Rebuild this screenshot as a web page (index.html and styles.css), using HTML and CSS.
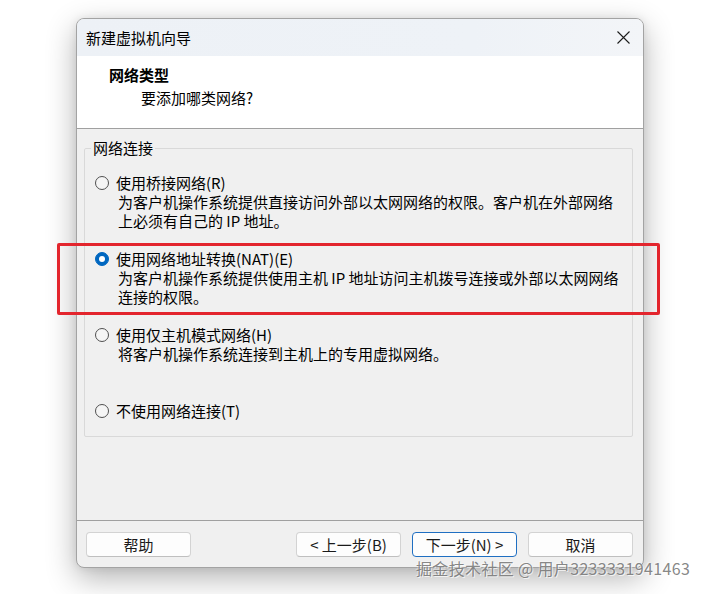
FILE: index.html
```html
<!DOCTYPE html>
<html lang="zh-CN">
<head>
<meta charset="utf-8">
<title>新建虚拟机向导</title>
<link rel="stylesheet" href="styles.css">
</head>
<body>
<div class="stage">
  <div class="window">
    <div class="titlebar">
      <span class="title">新建虚拟机向导</span>
      <svg class="close" width="13" height="13" viewBox="0 0 13 13"><path d="M0.5 0.5L12.5 12.5M12.5 0.5L0.5 12.5" stroke="#1b1b1b" stroke-width="1.1" fill="none"/></svg>
    </div>
    <div class="header">
      <div class="h-title">网络类型</div>
      <div class="h-sub">要添加哪类网络?</div>
    </div>
    <div class="content">
      <fieldset class="group">
        <legend>网络连接</legend>
        <div class="option">
          <div class="opt-label"><span class="radio"></span>使用桥接网络(R)</div>
          <div class="desc"><div class="line">为客户机操作系统提供直接访问外部以太网网络的权限。客户机在外部网络</div><div class="line">上必须有自己的 IP 地址。</div></div>
        </div>
        <div class="option">
          <div class="opt-label"><span class="radio checked"></span>使用网络地址转换(NAT)(E)</div>
          <div class="desc"><div class="line">为客户机操作系统提供使用主机 IP 地址访问主机拨号连接或外部以太网网络</div><div class="line">连接的权限。</div></div>
        </div>
        <div class="option">
          <div class="opt-label"><span class="radio"></span>使用仅主机模式网络(H)</div>
          <div class="desc"><div class="line">将客户机操作系统连接到主机上的专用虚拟网络。</div></div>
        </div>
        <div class="option last">
          <div class="opt-label"><span class="radio"></span>不使用网络连接(T)</div>
        </div>
      </fieldset>
    </div>
    <div class="footer">
      <button class="btn">帮助</button>
      <div class="spacer"></div>
      <button class="btn">&lt; 上一步(B)</button>
      <button class="btn primary">下一步(N) &gt;</button>
      <button class="btn">取消</button>
    </div>
  </div>
  <div class="annot"></div>
  <div class="watermark">掘金技术社区 @ 用户3233331941463</div>
</div>
</body>
</html>
```

FILE: styles.css
```css
html, body {
  margin: 0;
  padding: 0;
  background: #ffffff;
}

body {
  font-family: "Noto Sans CJK SC", "Noto Sans", sans-serif;
  font-size: 15px;
  color: #000;
}

.stage {
  position: relative;
  width: 709px;
  height: 594px;
  box-sizing: border-box;
  padding: 18px 0 0 76px;
  overflow: hidden;
}

.window {
  width: 568px;
  height: 550px;
  box-sizing: border-box;
  border: 1px solid #a3a3a3;
  border-radius: 8px;
  background: #f0f0f0;
  box-shadow: 0 10px 30px rgba(0, 0, 0, 0.30), 0 0 8px rgba(0, 0, 0, 0.08);
  display: flex;
  flex-direction: column;
}

.titlebar {
  height: 37px;
  flex: none;
  display: flex;
  align-items: center;
  justify-content: space-between;
  padding: 0 13px 0 9px;
  background: linear-gradient(to right, #edf1f6 0%, #eef2f7 70%, #f3f5f8 100%);
  border-radius: 7px 7px 0 0;
  line-height: 20px;
}

.close {
  display: block;
}

.header {
  height: 73px;
  box-sizing: border-box;
  flex: none;
  background: #ffffff;
  border-bottom: 1px solid #a0a0a0;
  padding: 9px 0 0 32px;
}

.h-title {
  font-weight: bold;
  line-height: 20px;
}

.h-sub {
  margin: 3px 0 0 32px;
  line-height: 20px;
}

.content {
  flex: 1;
  padding: 9px 10px 0 7px;
}

.group {
  margin: 0;
  border: 1px solid #d9d9d9;
  border-radius: 2px;
  padding: 15px 0 15px 0;
  min-width: 0;
}

.group legend {
  margin-left: 6px;
  padding: 0 2px;
  line-height: 20px;
}

.option {
  padding-left: 10px;
  margin-bottom: 19px;
}

.option.last {
  margin-bottom: 0;
}

.opt-label {
  display: flex;
  align-items: center;
  line-height: 20px;
  white-space: nowrap;
}

.radio {
  width: 14px;
  height: 14px;
  box-sizing: border-box;
  border: 1px solid #505050;
  border-radius: 50%;
  margin-right: 7px;
  flex: none;
  background: #f5f5f5;
  position: relative;
}

.radio.checked {
  border-color: #0067c0;
  background: #0067c0;
}

.radio.checked::after {
  content: "";
  position: absolute;
  left: 3px;
  top: 3px;
  width: 6px;
  height: 6px;
  border-radius: 50%;
  background: #ffffff;
}

.desc {
  padding-left: 23px;
  min-height: 37px;
  white-space: nowrap;
}

.desc .line {
  height: 18.5px;
  line-height: 18.5px;
}

.footer {
  flex: none;
  height: 46px;
  border-top: 1px solid #a0a0a0;
  box-sizing: content-box;
  display: flex;
  align-items: flex-start;
  gap: 11px;
  padding: 0 10px 0 9px;
  border-radius: 0 0 7px 7px;
}

.spacer {
  flex: 1;
}

.btn {
  margin-top: 11px;
  width: 105px;
  height: 25px;
  padding: 0;
  background: #fdfdfd;
  border: 1px solid #d3d3d3;
  border-bottom-color: #bfbfbf;
  border-radius: 4px;
  font-family: "Noto Sans CJK SC", "Noto Sans", sans-serif;
  font-size: 15px;
  line-height: 22px;
  color: #1a1a1a;
}

.btn.primary {
  border-color: #1f6fc2;
}

.annot {
  position: absolute;
  left: 57px;
  top: 243px;
  width: 603px;
  height: 72px;
  box-sizing: border-box;
  border: 3px solid #e3252d;
  border-radius: 2px;
}

.watermark {
  position: absolute;
  left: 416px;
  top: 558px;
  font-size: 16px;
  line-height: 20px;
  letter-spacing: 0.35px;
  white-space: nowrap;
  color: rgba(120, 120, 120, 0.9);
  text-shadow: 1px 1px 0 rgba(255, 255, 255, 0.7), -1px -1px 0 rgba(255, 255, 255, 0.4);
}
```
